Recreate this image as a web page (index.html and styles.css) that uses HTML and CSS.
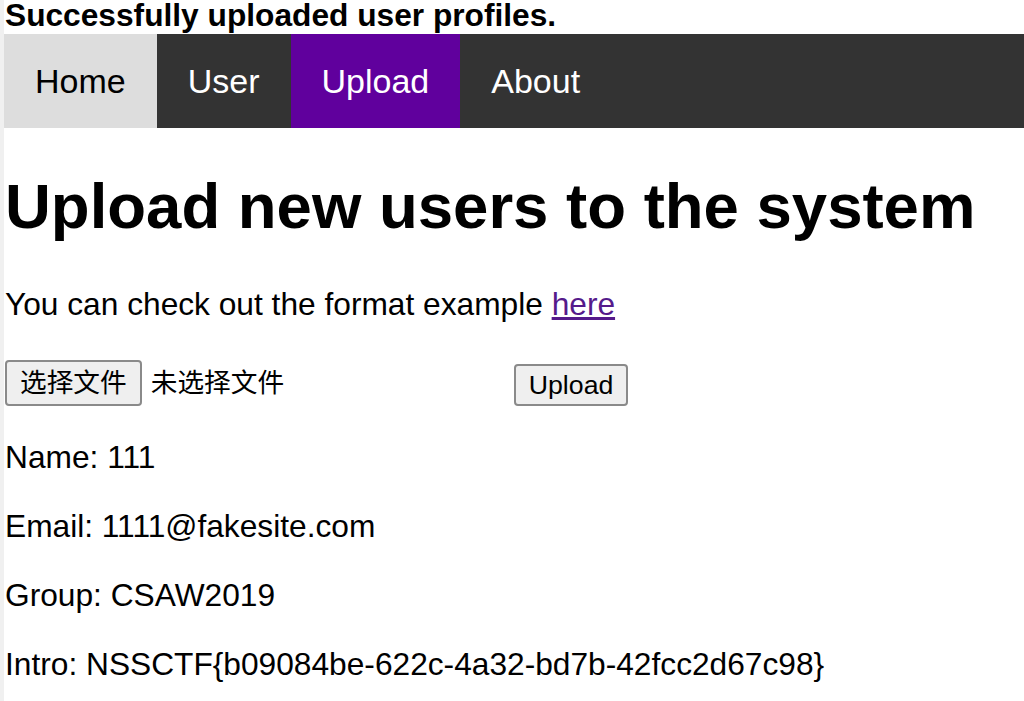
FILE: index.html
```html
<!DOCTYPE html>
<html lang="en">
<head>
    <meta charset="UTF-8">
    <meta name="viewport" content="width=device-width, initial-scale=1.0">
    <title>Upload</title>
    <link rel="stylesheet" href="styles.css">
</head>
<body>
    <div class="page">
        <div class="notice">Successfully uploaded user profiles.</div>
        <ul class="nav">
            <li><a href="#" class="home">Home</a></li>
            <li><a href="#">User</a></li>
            <li><a href="#" class="active">Upload</a></li>
            <li><a href="#">About</a></li>
        </ul>

        <h1>Upload new users to the system</h1>
        <p>You can check out the format example <a href="#" class="example">here</a></p>

        <form class="upload-form">
            <label class="file-btn">选择文件<input type="file" name="file" hidden></label>
            <span class="file-name">未选择文件</span>
            <button type="button" class="submit-btn">Upload</button>
        </form>

        <p class="first-field">Name: 111</p>
        <p>Email: 1111@fakesite.com</p>
        <p>Group: CSAW2019</p>
        <p>Intro: NSSCTF{b09084be-622c-4a32-bd7b-42fcc2d67c98}</p>
    </div>
</body>
</html>
```

FILE: styles.css
```css
body {
    margin: 0;
    padding: 0;
    font-family: "Liberation Sans", Arial, "Noto Sans CJK SC", sans-serif;
    font-size: 31.7px;
    color: #000;
    background-color: #fff;
    overflow: hidden;
}

.page {
    border-left: 4px solid #f0f0f0;
    margin-top: -3px;
    padding-left: 1px;
    min-height: 720px;
}

.notice {
    font-weight: bold;
}

.nav {
    list-style: none;
    margin: 0 0 0 -1px;
    padding: 0;
    display: flex;
    background-color: #333;
}

.nav a {
    display: block;
    padding: 28px 31px 27px;
    font-size: 34px;
    color: #fff;
    text-decoration: none;
}

.nav a.home {
    background-color: #ddd;
    color: #000;
}

.nav a.active {
    background-color: #60009d;
}

h1 {
    font-size: 63.5px;
    margin: 42px 0 44px;
}

p {
    margin: 32px 0;
}

.example {
    color: #551a8b;
}

.upload-form {
    display: flex;
    align-items: flex-end;
    margin: 37px 0 0;
}

.file-btn,
.submit-btn {
    font-family: "Liberation Sans", Arial, "Noto Sans CJK SC", sans-serif;
    font-size: 26.7px;
    color: #000;
    background-color: #efefef;
    border: 2px solid #8a8a8a;
    border-radius: 4px;
    padding: 2px 13px;
    box-sizing: border-box;
}

.file-btn {
    height: 46px;
    line-height: 38px;
}

.file-name {
    font-size: 26.7px;
    line-height: 46px;
    margin-left: 9px;
    width: 363px;
}

.submit-btn {
    height: 42px;
    line-height: 34px;
}

.first-field {
    margin-top: 33px;
}
```
